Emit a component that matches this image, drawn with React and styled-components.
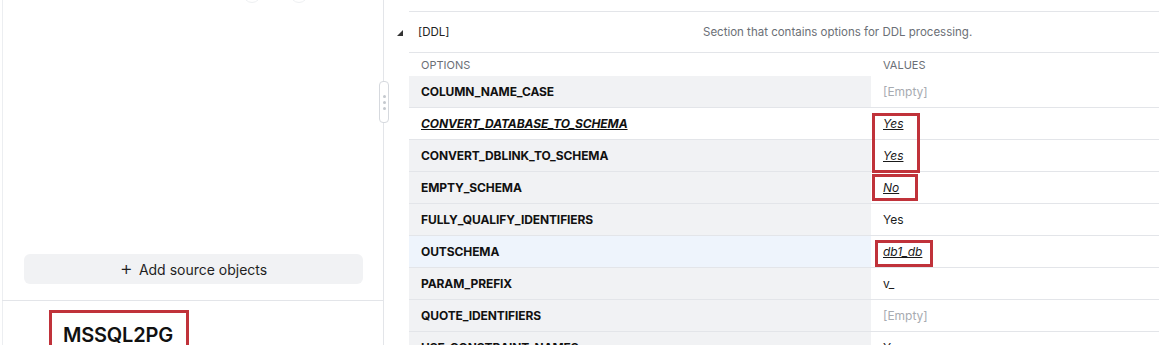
import styled, { createGlobalStyle } from "styled-components";

const GlobalStyle = createGlobalStyle`
  html, body {
    margin: 0;
    padding: 0;
    background: #fff;
  }
  body {
    font-family: Inter, "Noto Sans", "Liberation Sans", sans-serif;
    color: #1a1a1a;
  }
`;

const rows = [
  { name: "COLUMN_NAME_CASE", value: "[Empty]", empty: true },
  { name: "CONVERT_DATABASE_TO_SCHEMA", value: "Yes", changed: true, nameChanged: true, plain: true, box: "top" },
  { name: "CONVERT_DBLINK_TO_SCHEMA", value: "Yes", changed: true },
  { name: "EMPTY_SCHEMA", value: "No", changed: true, box: "single" },
  { name: "FULLY_QUALIFY_IDENTIFIERS", value: "Yes" },
  { name: "OUTSCHEMA", value: "db1_db", changed: true, selected: true, box: "wide" },
  { name: "PARAM_PREFIX", value: "v_" },
  { name: "QUOTE_IDENTIFIERS", value: "[Empty]", empty: true },
  { name: "USE_CONSTRAINT_NAMES", value: "Yes" },
];

const App = () => {
  return (
    <>
      <GlobalStyle />
      <Page>
        <LeftPanel>
          <TopArea>
            <Dot $left={243} />
            <Dot $left={290} />
          </TopArea>
          <AddButton>
            <span className="plus">+</span> Add source objects
          </AddButton>
          <Footer>
            <ProjectName>MSSQL2PG</ProjectName>
          </Footer>
          <Handle>
            <i />
            <i />
            <i />
          </Handle>
        </LeftPanel>

        <RightPanel>
          <CaretCell>
            <Caret />
          </CaretCell>
          <Section>
            <SectionHeader>
              <SectionName>[DDL]</SectionName>
              <SectionDesc>Section that contains options for DDL processing.</SectionDesc>
            </SectionHeader>
            <HeadRow>
              <HeadCell>OPTIONS</HeadCell>
              <HeadCell>VALUES</HeadCell>
            </HeadRow>
            {rows.map((r) => (
              <Row key={r.name}>
                <NameCell $plain={r.plain} $selected={r.selected}>
                  <OptionName $changed={r.nameChanged}>{r.name}</OptionName>
                </NameCell>
                <ValueCell>
                  <Value $changed={r.changed} $empty={r.empty}>
                    {r.value}
                  </Value>
                  {r.box && <Mark $kind={r.box} />}
                </ValueCell>
              </Row>
            ))}
          </Section>
        </RightPanel>
      </Page>
    </>
  );
};

export default App;

const Page = styled.div`
  display: flex;
  width: 1159px;
  height: 345px;
  overflow: hidden;
  padding-left: 2px;
  box-sizing: border-box;
`;

const LeftPanel = styled.div`
  position: relative;
  width: 380px;
  flex: none;
  display: flex;
  flex-direction: column;
  border-left: 1px solid #eceef1;
  border-right: 1px solid #e3e5e9;
`;

const TopArea = styled.div`
  position: relative;
  flex: 1;
`;

const Dot = styled.div`
  position: absolute;
  top: -15px;
  left: ${(p) => p.$left - 3}px;
  width: 16px;
  height: 16px;
  border-radius: 50%;
  border: 1px solid #eef0f2;
  background: #fff;
`;

const AddButton = styled.button`
  margin: 0 20px 16px 21px;
  height: 30px;
  border: none;
  border-radius: 6px;
  background: #f1f2f4;
  font-family: Inter, "Noto Sans", sans-serif;
  font-size: 14px;
  color: #1f1f1f;
  display: flex;
  align-items: center;
  justify-content: center;
  gap: 2px;

  .plus {
    font-size: 20px;
    font-weight: 300;
    line-height: 1;
    margin-right: 4px;
    margin-top: -2px;
  }
`;

const Footer = styled.div`
  height: 45px;
  border-top: 1px solid #e3e5e9;
  margin-left: -1px;
  padding: 9px 0 0 47px;
  box-sizing: border-box;
`;

const ProjectName = styled.div`
  display: inline-block;
  border: 3px solid #c0323a;
  border-bottom: none;
  padding: 10px 13px 10px 11px;
  font-size: 20px;
  font-weight: 600;
  letter-spacing: -0.2px;
  color: #111;
`;

const Handle = styled.div`
  position: absolute;
  top: 81px;
  right: -6px;
  width: 8px;
  height: 40px;
  border: 1px solid #d6d9de;
  border-radius: 4px;
  background: #fff;
  display: flex;
  flex-direction: column;
  align-items: center;
  justify-content: center;
  gap: 3px;

  i {
    width: 3px;
    height: 3px;
    border-radius: 50%;
    background: #c4c8ce;
  }
`;

const RightPanel = styled.div`
  flex: 1;
  display: grid;
  grid-template-columns: 25px 1fr;
  padding-top: 11px;
  align-content: start;
`;

const CaretCell = styled.div`
  padding: 19px 0 0 13px;
`;

const Caret = styled.div`
  width: 0;
  height: 0;
  border-left: 6px solid transparent;
  border-bottom: 6px solid #333;
`;

const Section = styled.div`
  display: flex;
  flex-direction: column;
`;

const SectionHeader = styled.div`
  display: flex;
  align-items: center;
  height: 40px;
  border-top: 1px solid #e3e5e9;
  border-bottom: 1px solid #e3e5e9;
  padding-left: 9px;
  font-size: 11.5px;
`;

const SectionName = styled.div`
  width: 285px;
  color: #222;
`;

const SectionDesc = styled.div`
  color: #6b6f76;
`;

const HeadRow = styled.div`
  display: grid;
  grid-template-columns: 462px 1fr;
  height: 23px;
  align-items: center;
`;

const HeadCell = styled.div`
  padding-left: 12px;
  font-size: 11px;
  color: #6b6f76;
`;

const Row = styled.div`
  display: grid;
  grid-template-columns: 462px 1fr;
  height: 32px;
  border-bottom: 1px solid #e3e5e9;
  box-sizing: border-box;
`;

const NameCell = styled.div`
  display: flex;
  align-items: center;
  padding-left: 12px;
  background: ${(p) => (p.$plain ? "#fff" : p.$selected ? "#eef4fc" : "#f1f2f4")};
`;

const OptionName = styled.span`
  font-size: 12px;
  font-weight: 700;
  letter-spacing: -0.1px;
  color: #111;
  font-style: ${(p) => (p.$changed ? "italic" : "normal")};
  text-decoration: ${(p) => (p.$changed ? "underline" : "none")};
`;

const ValueCell = styled.div`
  position: relative;
  display: flex;
  align-items: center;
  padding-left: 12px;
`;

const Value = styled.span`
  font-size: 12px;
  color: ${(p) => (p.$empty ? "#a7abb1" : "#1a1a1a")};
  font-style: ${(p) => (p.$changed ? "italic" : "normal")};
  text-decoration: ${(p) => (p.$changed ? "underline" : "none")};
`;

const markBox = {
  top: "top: 5px; left: 1px; width: 42px; height: 54px;",
  single: "top: 2px; left: 1px; width: 40px; height: 21px;",
  wide: "top: 4px; left: 4px; width: 52px; height: 21px;",
};

const Mark = styled.div`
  position: absolute;
  border: 3px solid #c0323a;
  pointer-events: none;
  ${(p) => markBox[p.$kind]}
`;
